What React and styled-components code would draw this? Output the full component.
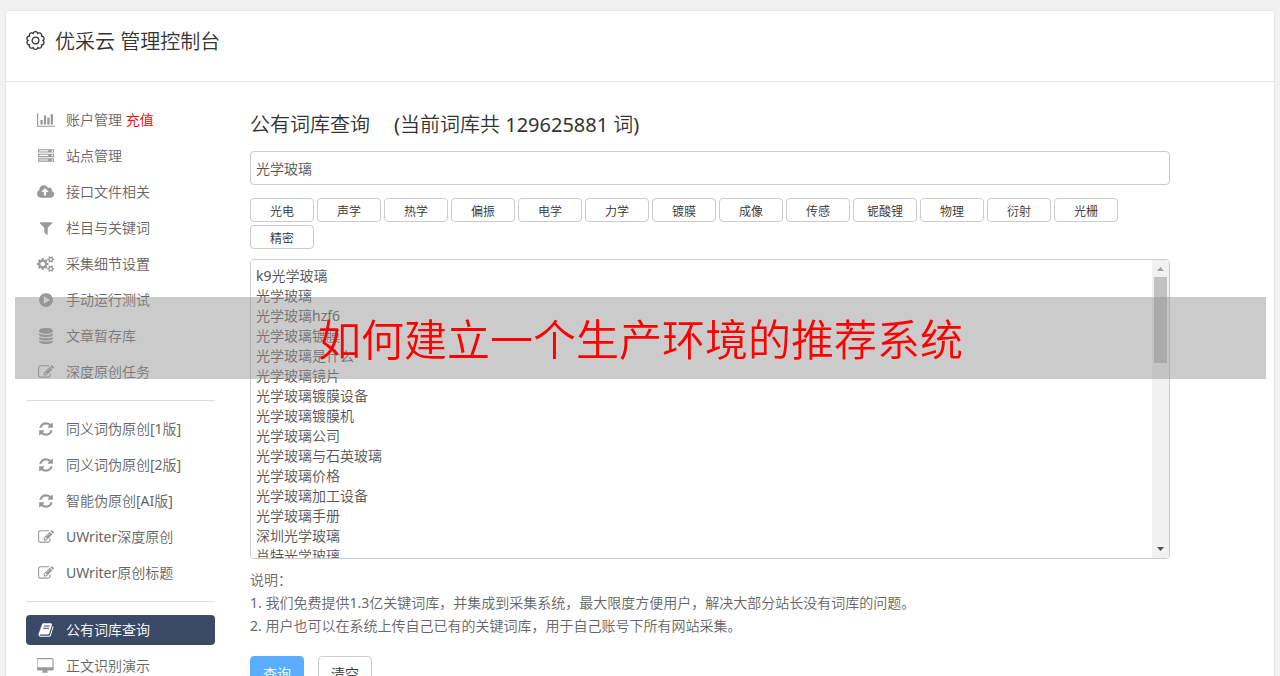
import React, { useState } from 'react';
import styled, { createGlobalStyle } from 'styled-components';

const icons = {
  chart: [2048, 'M640 896v512h-256v-512h256zm384-512v1024h-256v-1024h256zm1024 1152v128h-2048v-1536h128v1408h1920zm-640-896v768h-256v-768h256zm384-384v1152h-256v-1152h256z'],
  server: [1792, 'M128 1408h1024v-128h-1024v128zm0-512h1024v-128h-1024v128zm1568 448q0-40-28-68t-68-28-68 28-28 68 28 68 68 28 68-28 28-68zm-1568-960h1024v-128h-1024v128zm1568 448q0-40-28-68t-68-28-68 28-28 68 28 68 68 28 68-28 28-68zm0-512q0-40-28-68t-68-28-68 28-28 68 28 68 68 28 68-28 28-68zm96 832v384h-1792v-384h1792zm0-512v384h-1792v-384h1792zm0-512v384h-1792v-384h1792z'],
  upload: [1920, 'M1280 864q0-14-9-23l-352-352q-9-9-23-9t-23 9l-351 351q-10 12-10 24 0 14 9 23t23 9h224v352q0 13 9.5 22.5t22.5 9.5h192q13 0 22.5-9.5t9.5-22.5v-352h224q13 0 22.5-9.5t9.5-22.5zm640 288q0 159-112.5 271.5t-271.5 112.5h-1088q-185 0-316.5-131.5t-131.5-316.5q0-130 70-240t188-165q-2-30-2-43 0-212 150-362t362-150q156 0 285.5 87t188.5 231q71-62 166-62 106 0 181 75t75 181q0 76-41 138 130 31 213.5 135.5t83.5 238.5z'],
  filter: [1792, 'M1595 295q17 41-14 70l-493 493v742q0 42-39 59-13 5-25 5-27 0-45-19l-256-256q-19-19-19-45v-486l-493-493q-31-29-14-70 17-39 59-39h1280q42 0 59 39z'],
  cogs: [1920, 'M896 896q0-106-75-181t-181-75-181 75-75 181 75 181 181 75 181-75 75-181zm768 512q0-52-38-90t-90-38-90 38-38 90q0 53 37.5 90.5t90.5 37.5 90.5-37.5 37.5-90.5zm0-1024q0-52-38-90t-90-38-90 38-38 90q0 53 37.5 90.5t90.5 37.5 90.5-37.5 37.5-90.5zm-384 421v185q0 10-7 19.5t-16 10.5l-155 24q-11 35-32 76 34 48 90 115 7 11 7 20 0 12-7 19-23 30-82.5 89.5t-78.5 59.5q-11 0-21-7l-115-90q-37 19-77 31-11 108-23 155-7 24-30 24h-186q-11 0-20-7.5t-10-17.5l-23-153q-34-10-75-31l-118 89q-7 7-20 7-11 0-21-8-144-133-144-160 0-9 7-19 10-14 41-53t47-61q-23-44-35-82l-152-24q-10-1-17-9.5t-7-19.5v-185q0-10 7-19.5t16-10.5l155-24q11-35 32-76-34-48-90-115-7-11-7-20 0-12 7-20 22-30 82-89t79-59q11 0 21 7l115 90q34-18 77-32 11-108 23-154 7-24 30-24h186q11 0 20 7.5t10 17.5l23 153q34 10 75 31l118-89q8-7 20-7 11 0 21 8 144 133 144 160 0 8-7 19-12 16-42 54t-45 60q23 48 34 82l152 23q10 2 17 10.5t7 19.5zm640 533v140q0 16-149 31-12 27-30 52 51 113 51 138 0 4-4 7-122 71-124 71-8 0-46-47t-52-68q-20 2-30 2t-30-2q-14 21-52 68t-46 47q-2 0-124-71-4-3-4-7 0-25 51-138-18-25-30-52-149-15-149-31v-140q0-16 149-31 13-29 30-52-51-113-51-138 0-4 4-7 4-2 35-20t59-34 30-16q8 0 46 46.5t52 67.5q20-2 30-2t30 2q51-71 92-112l6-2q4 0 124 70 4 3 4 7 0 25-51 138 17 23 30 52 149 15 149 31zm0-1024v140q0 16-149 31-12 27-30 52 51 113 51 138 0 4-4 7-122 71-124 71-8 0-46-47t-52-68q-20 2-30 2t-30-2q-14 21-52 68t-46 47q-2 0-124-71-4-3-4-7 0-25 51-138-18-25-30-52-149-15-149-31v-140q0-16 149-31 13-29 30-52-51-113-51-138 0-4 4-7 4-2 35-20t59-34 30-16q8 0 46 46.5t52 67.5q20-2 30-2t30 2q51-71 92-112l6-2q4 0 124 70 4 3 4 7 0 25-51 138 17 23 30 52 149 15 149 31z'],
  play: [1792, 'M896 128q209 0 385.5 103t279.5 279.5 103 385.5-103 385.5-279.5 279.5-385.5 103-385.5-103-279.5-279.5-103-385.5 103-385.5 279.5-279.5 385.5-103zm384 823q32-18 32-55t-32-55l-544-320q-31-19-64-1-32 19-32 56v640q0 37 32 56 16 8 32 8 17 0 32-9z'],
  database: [1792, 'M896 768q237 0 443-43t325-127v170q0 69-103 128t-280 93.5-385 34.5-385-34.5-280-93.5-103-128v-170q119 84 325 127t443 43zm0 768q237 0 443-43t325-127v170q0 69-103 128t-280 93.5-385 34.5-385-34.5-280-93.5-103-128v-170q119 84 325 127t443 43zm0-384q237 0 443-43t325-127v170q0 69-103 128t-280 93.5-385 34.5-385-34.5-280-93.5-103-128v-170q119 84 325 127t443 43zm0-1152q208 0 385 34.5t280 93.5 103 128v128q0 69-103 128t-280 93.5-385 34.5-385-34.5-280-93.5-103-128v-128q0-69 103-128t280-93.5 385-34.5z'],
  edit: [1792, 'M888 1184l116-116-152-152-116 116v56h96v96h56zm440-720q-16-16-33 1l-350 350q-17 17-1 33t33-1l350-350q17-17 1-33zm80 594v190q0 119-84.5 203.5t-203.5 84.5h-832q-119 0-203.5-84.5t-84.5-203.5v-832q0-119 84.5-203.5t203.5-84.5h832q63 0 117 25 15 7 18 23 3 17-9 29l-49 49q-14 14-32 8-23-6-45-6h-832q-66 0-113 47t-47 113v832q0 66 47 113t113 47h832q66 0 113-47t47-113v-126q0-13 9-22l64-64q15-15 35-7t20 29zm-96-738l288 288-672 672h-288v-288zm444 132l-92 92-288-288 92-92q28-28 68-28t68 28l152 152q28 28 28 68t-28 68z'],
  refresh: [1792, 'M1639 1056q0 5-1 7-64 268-268 434.5t-478 166.5q-146 0-282.5-55t-243.5-157l-129 129q-19 19-45 19t-45-19-19-45v-448q0-26 19-45t45-19h448q26 0 45 19t19 45-19 45l-137 137q71 66 161 102t187 36q134 0 250-65t186-179q11-17 53-117 8-23 30-23h192q13 0 22.5 9.5t9.5 22.5zm25-800v448q0 26-19 45t-45 19h-448q-26 0-45-19t-19-45 19-45l138-138q-148-137-349-137-134 0-250 65t-186 179q-11 17-53 117-8 23-30 23h-199q-13 0-22.5-9.5t-9.5-22.5v-7q65-268 270-434.5t480-166.5q146 0 284 55.5t245 156.5l130-129q19-19 45-19t45 19 19 45z'],
  book: [1792, 'M1703 478q40 57 18 129l-275 906q-19 64-76.5 107.5t-122.5 43.5h-923q-77 0-148.5-53.5t-99.5-131.5q-24-67-2-127 0-4 3-27t4-37q1-8-3-21.5t-3-19.5q2-11 8-21t16.5-23.5 16.5-23.5q23-38 45-91.5t30-91.5q3-10 .5-30t-.5-28q3-11 17-28t17-23q21-36 42-92t25-90q1-9-2.5-32t.5-28q4-13 22-30.5t22-22.5q19-26 42.5-84.5t27.5-96.5q1-8-3-25.5t-2-26.5q2-8 9-18t18-23 17-21q8-12 16.5-30.5t15-35 16-36 19.5-32 26.5-23.5 36-11.5 47.5 5.5l-1 3q38-9 51-9h761q74 0 114 56t18 130l-274 906q-36 119-71.5 153.5t-128.5 34.5h-869q-27 0-38 15-11 16-1 43 24 70 144 70h923q29 0 56-15.5t35-41.5l300-987q7-22 5-57 38 15 59 43zm-1064 2q-4 13 2 22.5t20 9.5h608q13 0 25.5-9.5t16.5-22.5l21-64q4-13-2-22.5t-20-9.5h-608q-13 0-25.5 9.5t-16.5 22.5zm-83 256q-4 13 2 22.5t20 9.5h608q13 0 25.5-9.5t16.5-22.5l21-64q4-13-2-22.5t-20-9.5h-608q-13 0-25.5 9.5t-16.5 22.5z'],
  desktop: [1920, 'M1728 992v-832q0-13-9.5-22.5t-22.5-9.5h-1600q-13 0-22.5 9.5t-9.5 22.5v832q0 13 9.5 22.5t22.5 9.5h1600q13 0 22.5-9.5t9.5-22.5zm128-832v1088q0 66-47 113t-113 47h-544q0 37 16 77.5t32 71 16 43.5q0 26-19 45t-45 19h-512q-26 0-45-19t-19-45q0-14 16-44t32-70 16-78h-544q-66 0-113-47t-47-113v-1088q0-66 47-113t113-47h1600q66 0 113 47t47 113z'],
};

const menus = [
  [
    { icon: 'chart', label: '账户管理', extra: '充值' },
    { icon: 'server', label: '站点管理' },
    { icon: 'upload', label: '接口文件相关' },
    { icon: 'filter', label: '栏目与关键词' },
    { icon: 'cogs', label: '采集细节设置' },
    { icon: 'play', label: '手动运行测试' },
    { icon: 'database', label: '文章暂存库' },
    { icon: 'edit', label: '深度原创任务' },
  ],
  [
    { icon: 'refresh', label: '同义词伪原创[1版]' },
    { icon: 'refresh', label: '同义词伪原创[2版]' },
    { icon: 'refresh', label: '智能伪原创[AI版]' },
    { icon: 'edit', label: 'UWriter深度原创' },
    { icon: 'edit', label: 'UWriter原创标题' },
  ],
  [
    { icon: 'book', label: '公有词库查询', active: true },
    { icon: 'desktop', label: '正文识别演示' },
  ],
];

const tags = ['光电', '声学', '热学', '偏振', '电学', '力学', '镀膜', '成像', '传感', '铌酸锂', '物理', '衍射', '光栅', '精密'];

const words = [
  'k9光学玻璃',
  '光学玻璃',
  '光学玻璃hzf6',
  '光学玻璃镀膜',
  '光学玻璃是什么',
  '光学玻璃镜片',
  '光学玻璃镀膜设备',
  '光学玻璃镀膜机',
  '光学玻璃公司',
  '光学玻璃与石英玻璃',
  '光学玻璃价格',
  '光学玻璃加工设备',
  '光学玻璃手册',
  '深圳光学玻璃',
  '肖特光学玻璃',
].join('\n');

function MenuIcon({ name }) {
  const [width, path] = icons[name];
  return (
    <IconBox>
      <svg height="16" viewBox={`0 0 ${width} 1792`} fill="currentColor" aria-hidden="true">
        <path d={path} />
      </svg>
    </IconBox>
  );
}

// ten round lobes around the hub
function gearPath() {
  let d = '';
  for (let i = 0; i <= 120; i++) {
    const a = (i / 120) * Math.PI * 2;
    const r = 7 + 1.4 * Math.pow(Math.abs(Math.sin(5 * a)), 0.7);
    d += `${i ? 'L' : 'M'}${(9 + r * Math.cos(a)).toFixed(2)} ${(9 + r * Math.sin(a)).toFixed(2)}`;
  }
  return `${d}Z`;
}

function App() {
  const [keyword, setKeyword] = useState('光学玻璃');
  const [result, setResult] = useState(words);

  function handleClear() {
    setKeyword('');
    setResult('');
  }

  return (
    <>
      <GlobalStyle />
      <Card>
        <Header>
          <svg width="19" height="19" viewBox="0 0 18 18" fill="none" stroke="currentColor" strokeWidth="1.2" aria-hidden="true">
            <path d={gearPath()} />
            <circle cx="9" cy="9" r="3.2" />
          </svg>
          <Title>优采云 管理控制台</Title>
        </Header>
        <Content>
          <Sidebar>
            {menus.map((menu, i) => (
              <Menu key={i}>
                {menu.map(item => (
                  <li key={item.label}>
                    <MenuLink href="#" $active={item.active}>
                      <MenuIcon name={item.icon} />
                      <span>{item.label} {item.extra && <Red>{item.extra}</Red>}</span>
                    </MenuLink>
                  </li>
                ))}
              </Menu>
            ))}
          </Sidebar>
          <Main>
            <Heading>
              <span>公有词库查询</span>
              <span>(当前词库共 129625881 词)</span>
            </Heading>
            <Input aria-label="关键词" value={keyword} onChange={e => setKeyword(e.target.value)} />
            <Tags>
              {tags.map(tag => (
                <Tag key={tag} type="button" onClick={() => setKeyword(tag)}>{tag}</Tag>
              ))}
            </Tags>
            <ResultBox>
              <Result aria-label="查询结果" value={result} onChange={e => setResult(e.target.value)} />
              <Scrollbar aria-hidden="true">
                <Arrow viewBox="0 0 17 17" fill="#a3a3a3"><path d="M5 11h7L8.500 7z" /></Arrow>
                <Thumb />
                <Arrow viewBox="0 0 17 17" fill="#505050"><path d="M5 6h7l-3.500 4z" /></Arrow>
              </Scrollbar>
            </ResultBox>
            <Notes>
              <p>说明：</p>
              <p>1. 我们免费提供1.3亿关键词库，并集成到采集系统，最大限度方便用户，解决大部分站长没有词库的问题。</p>
              <p>2. 用户也可以在系统上传自己已有的关键词库，用于自己账号下所有网站采集。</p>
            </Notes>
            <Actions>
              <Button type="button" $primary>查询</Button>
              <Button type="button" onClick={handleClear}>清空</Button>
            </Actions>
          </Main>
        </Content>
      </Card>
      <Banner>如何建立一个生产环境的推荐系统</Banner>
    </>
  );
}

const GlobalStyle = createGlobalStyle`
  * {
    box-sizing: border-box;
  }

  html {
    scrollbar-width: none;
  }

  body {
    margin: 0;
    padding: 10px 5px;
    background: #f1f1f1;
    color: #666;
    font-size: 14px;
  }

  body, button, input, textarea {
    font-family: 'Noto Sans', 'Noto Sans CJK SC DemiLight', 'Noto Sans CJK SC', sans-serif;
  }
`;

const Card = styled.div`
  background: #fff;
  border: 1px solid #e5e5e5;
  border-radius: 4px;
`;

const Header = styled.header`
  display: flex;
  align-items: flex-start;
  gap: 10px;
  padding: 20px 20px 28px;
  border-bottom: 1px solid #e5e5e5;
  color: #333;
`;

const Title = styled.h1`
  margin: 0;
  font-size: 20px;
  font-weight: 400;
  line-height: 22px;
`;

const Content = styled.div`
  display: flex;
  gap: 35px;
  padding: 20px;
`;

const Sidebar = styled.nav`
  flex: 0 0 189px;
`;

const Menu = styled.ul`
  display: flex;
  flex-direction: column;
  gap: 6px;
  margin: 0;
  padding: 3px 0 13px;
  list-style: none;

  & + & {
    padding-top: 13px;
    border-top: 1px solid #ddd;
  }
`;

const MenuLink = styled.a`
  display: flex;
  align-items: center;
  height: 30px;
  border-radius: 4px;
  background: ${props => (props.$active ? '#3a4a66' : 'transparent')};
  color: ${props => (props.$active ? '#fff' : '#666')};
  line-height: 30px;
  text-decoration: none;

  svg {
    color: ${props => (props.$active ? '#fff' : '#999')};
  }
`;

const IconBox = styled.span`
  display: flex;
  justify-content: center;
  width: 40px;
`;

const Red = styled.span`
  color: #f00;
`;

const Main = styled.main`
  flex: 1;
  min-width: 0;
  max-width: 920px;
  padding-top: 8px;
`;

const Heading = styled.h2`
  display: flex;
  gap: 24px;
  margin: 0 0 11px;
  color: #333;
  font-size: 20px;
  font-weight: 400;
  line-height: 30px;
`;

const Input = styled.input`
  display: block;
  width: 100%;
  height: 34px;
  padding: 0 5px;
  border: 1px solid #ccc;
  border-radius: 4px;
  color: #555;
  font-size: 14px;
`;

const Tags = styled.div`
  display: flex;
  flex-wrap: wrap;
  gap: 3px;
  margin: 13px 0 10px;
`;

const Tag = styled.button`
  width: 64px;
  height: 24px;
  padding: 2px 0 0;
  border: 1px solid #ccc;
  border-radius: 4px;
  background: #fff;
  color: #333;
  font-size: 12px;
`;

const ResultBox = styled.div`
  display: flex;
  height: 300px;
  border: 1px solid #ccc;
  border-radius: 4px;
  overflow: hidden;
`;

const Result = styled.textarea`
  flex: 1;
  min-width: 0;
  padding: 6px 5px;
  border: 0;
  outline: 0;
  color: #555;
  font-size: 14px;
  line-height: 20px;
  resize: none;
  scrollbar-width: none;
`;

const Scrollbar = styled.div`
  display: flex;
  flex-direction: column;
  width: 17px;
  background: #f1f1f1;
`;

const Arrow = styled.svg`
  width: 17px;
  height: 17px;

  &:last-child {
    margin-top: auto;
  }
`;

const Thumb = styled.div`
  height: 86px;
  margin: 0 2px;
  background: #c1c1c1;
`;

const Notes = styled.div`
  margin: 9px 0 19px;
  line-height: 23px;

  p {
    margin: 0;
  }
`;

const Actions = styled.div`
  display: flex;
  gap: 14px;
`;

const Button = styled.button`
  width: 54px;
  height: 34px;
  padding: 0;
  border: 1px solid ${props => (props.$primary ? '#59aeff' : '#ccc')};
  border-radius: 4px;
  background: ${props => (props.$primary ? '#59aeff' : '#fff')};
  color: ${props => (props.$primary ? '#fff' : '#333')};
  font-size: 14px;
`;

const Banner = styled.div`
  position: absolute;
  top: 297px;
  left: 15px;
  right: 14px;
  padding-top: 4px;
  background: rgba(144, 144, 144, 0.47);
  color: #f00;
  font-size: 43px;
  line-height: 78px;
  text-align: center;
`;

export default App;
